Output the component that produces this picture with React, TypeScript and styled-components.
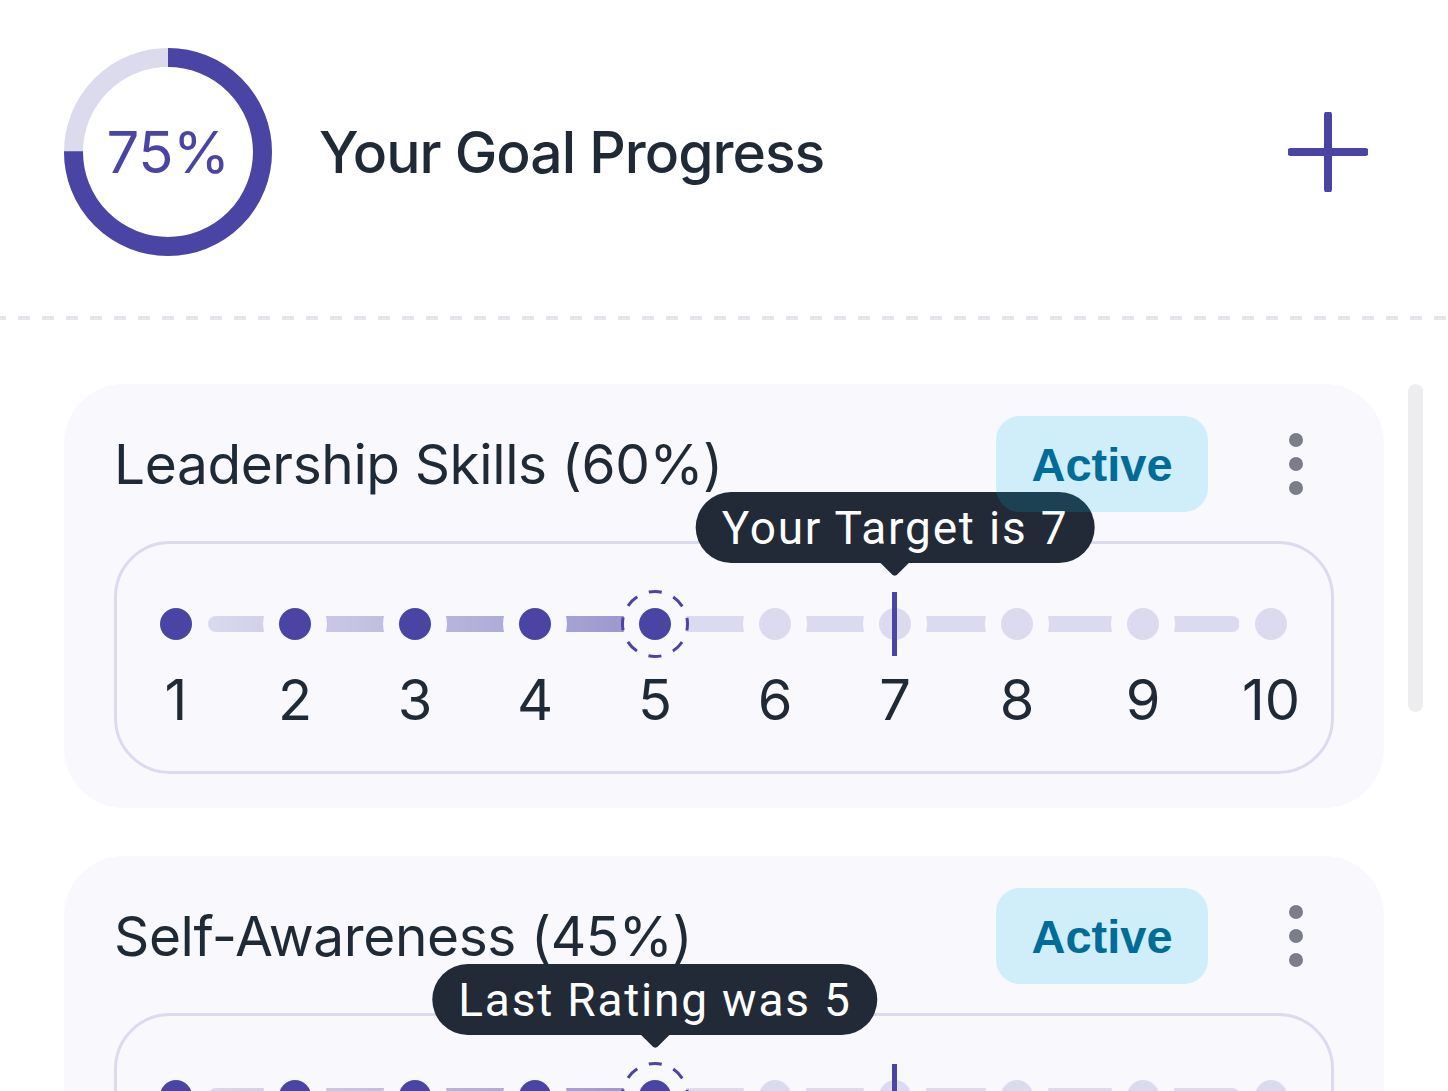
import React from 'react';
import styled, { createGlobalStyle } from 'styled-components';

const GlobalStyle = createGlobalStyle`
  html, body { margin: 0; padding: 0; background: #ffffff; overflow: hidden; }
  body { font-family: Inter, "Noto Sans", sans-serif; color: #1f2a36; }
  * { box-sizing: border-box; }
`;

const Page = styled.div`
  width: 1448px;
  height: 1091px;
  overflow: hidden;
  background: #ffffff;
`;

const Header = styled.header`
  display: flex;
  align-items: center;
  padding: 48px 80px 60px 64px;
`;

const RingWrap = styled.div`
  display: grid;
  width: 208px;
  height: 208px;
  flex: none;
  & > * { grid-area: 1 / 1; }
`;

const RingLabel = styled.span`
  align-self: center;
  justify-self: center;
  font-size: 58px;
  font-weight: 400;
  color: #4a45a5;
  letter-spacing: -0.5px;
`;

const HeaderTitle = styled.h1`
  flex: 1;
  margin: 0 0 0 47px;
  font-size: 57px;
  font-weight: 500;
  color: #1f2a36;
  letter-spacing: -1px;
`;

const PlusButton = styled.button`
  border: 0;
  padding: 0;
  background: transparent;
  width: 80px;
  height: 80px;
  display: flex;
`;

const Divider = styled.div`
  height: 4px;
  background-image: linear-gradient(to right, #e4e5ea 12px, transparent 12px);
  background-size: 24px 4px;
  background-position: 18px 0;
  background-repeat: repeat-x;
`;

const List = styled.div`
  display: flex;
  gap: 24px;
  padding: 64px 0 0 64px;
`;

const Cards = styled.div`
  width: 1320px;
  flex: none;
  display: flex;
  flex-direction: column;
  gap: 48px;
`;

const ScrollTrack = styled.div`
  width: 15px;
  flex: none;
`;

const ScrollThumb = styled.div`
  height: 328px;
  border-radius: 8px;
  background: #ededf0;
`;

const Card = styled.section`
  background: #f8f8fd;
  border-radius: 60px;
  padding: 32px 50px 34px;
`;

const CardHeader = styled.div`
  display: flex;
  align-items: center;
  height: 96px;
`;

const CardTitle = styled.h2`
  flex: 1;
  margin: 0;
  font-size: 55px;
  font-weight: 400;
  color: #1f2a36;
  white-space: nowrap;
  letter-spacing: -0.4px;
`;

const Badge = styled.span`
  position: relative;
  z-index: 2;
  width: 212px;
  height: 96px;
  border-radius: 24px;
  background: rgba(0, 185, 235, 0.16);
  color: #006d99;
  font-family: "Liberation Sans", Arial, sans-serif;
  font-weight: 700;
  font-size: 47px;
  display: flex;
  align-items: center;
  justify-content: center;
`;

const Kebab = styled.button`
  border: 0;
  background: transparent;
  padding: 0;
  width: 76px;
  margin-left: 50px;
  display: flex;
  flex-direction: column;
  align-items: center;
  gap: 10px;
`;

const KebabDot = styled.span`
  width: 14px;
  height: 14px;
  border-radius: 50%;
  background: #7b7e89;
`;

const RatingBox = styled.div`
  margin-top: 29px;
  border: 3px solid #dcdaee;
  border-radius: 56px;
  padding: 64px 0 39px 0;
`;

const Scale = styled.div`
  position: relative;
  display: grid;
  grid-template-columns: 118px repeat(6, 120px) 124px 128px 128px;
`;

const Track = styled.div`
  position: absolute;
  left: 91px;
  top: 8px;
  width: 1032px;
  height: 16px;
  border-radius: 8px;
  background: linear-gradient(to right, #dbd9ee 0px, #9894cd 448px, #dcdaee 448px, #dcdaee 100%);
`;

const Step = styled.div`
  display: flex;
  flex-direction: column;
  align-items: center;
  gap: 28px;
`;

const Dot = styled.div<{ $filled: boolean }>`
  position: relative;
  width: 32px;
  height: 32px;
  border-radius: 50%;
  background: ${(p) => (p.$filled ? '#4a45a5' : '#dcdaee')};
  box-shadow: 0 0 0 16px #f8f8fd;
`;

const RingSvg = styled.svg`
  position: absolute;
  left: -20px;
  top: -20px;
`;

const TargetBar = styled.span`
  position: absolute;
  left: 13px;
  top: -16px;
  width: 5px;
  height: 64px;
  background: #4a45a5;
`;

const Tooltip = styled.div`
  position: absolute;
  bottom: calc(100% + 45px);
  left: 50%;
  transform: translateX(-50%);
  height: 71px;
  padding: 0 26px;
  border-radius: 36px;
  background: #212a36;
  color: #ffffff;
  display: flex;
  align-items: center;
  white-space: nowrap;
  font-family: Roboto, "Noto Sans", sans-serif;
  font-size: 46px;
  font-weight: 400;
  letter-spacing: 1.8px;
  &::after {
    content: '';
    position: absolute;
    top: calc(100% - 10px);
    left: calc(50% - 10px);
    width: 20px;
    height: 20px;
    background: #212a36;
    border-radius: 0 0 4px 0;
    transform: rotate(45deg);
  }
`;

const Label = styled.span`
  font-size: 56px;
  line-height: 64px;
  font-weight: 400;
  color: #1f2a36;
`;

const ProgressRing = ({ value }: { value: number }) => {
  const r = 94.5;
  const c = 2 * Math.PI * r;
  return (
    <RingWrap>
      <svg width="208" height="208" viewBox="0 0 208 208">
        <circle cx="104" cy="104" r={r} fill="none" stroke="#dcdbee" strokeWidth="19" />
        <circle
          cx="104"
          cy="104"
          r={r}
          fill="none"
          stroke="#4a45a5"
          strokeWidth="19"
          strokeDasharray={`${(c * value) / 100} ${c}`}
          transform="rotate(-90 104 104)"
        />
      </svg>
      <RingLabel>{value}%</RingLabel>
    </RingWrap>
  );
};

const DashedRing = () => (
  <RingSvg width="72" height="72" viewBox="0 0 72 72">
    <circle
      cx="36"
      cy="36"
      r="32.5"
      fill="none"
      stroke="#4a45a5"
      strokeWidth="3"
      strokeDasharray="13 12.53"
      strokeDashoffset="6.5"
    />
  </RingSvg>
);

type GoalProps = {
  title: string;
  current: number;
  target: number;
  tooltipAt: number;
  tooltip: string;
};

const GoalCard = ({ title, current, target, tooltipAt, tooltip }: GoalProps) => (
  <Card>
    <CardHeader>
      <CardTitle>{title}</CardTitle>
      <Badge>Active</Badge>
      <Kebab aria-label="More">
        <KebabDot />
        <KebabDot />
        <KebabDot />
      </Kebab>
    </CardHeader>
    <RatingBox>
      <Scale>
        <Track />
        {Array.from({ length: 10 }, (_, i) => i + 1).map((n) => (
          <Step key={n}>
            <Dot $filled={n <= current}>
              {n === current && <DashedRing />}
              {n === target && <TargetBar />}
              {n === tooltipAt && <Tooltip>{tooltip}</Tooltip>}
            </Dot>
            <Label>{n}</Label>
          </Step>
        ))}
      </Scale>
    </RatingBox>
  </Card>
);

export default function App() {
  return (
    <Page>
      <GlobalStyle />
      <Header>
        <ProgressRing value={75} />
        <HeaderTitle>Your Goal Progress</HeaderTitle>
        <PlusButton aria-label="Add goal">
          <svg width="80" height="80" viewBox="0 0 80 80">
            <path d="M40 3 V77 M3 40 H77" stroke="#4a45a5" strokeWidth="8" strokeLinecap="round" fill="none" />
          </svg>
        </PlusButton>
      </Header>
      <Divider />
      <List>
        <Cards>
          <GoalCard title="Leadership Skills (60%)" current={5} target={7} tooltipAt={7} tooltip="Your Target is 7" />
          <GoalCard title="Self-Awareness (45%)" current={5} target={7} tooltipAt={5} tooltip="Last Rating was 5" />
        </Cards>
        <ScrollTrack>
          <ScrollThumb />
        </ScrollTrack>
      </List>
    </Page>
  );
}
